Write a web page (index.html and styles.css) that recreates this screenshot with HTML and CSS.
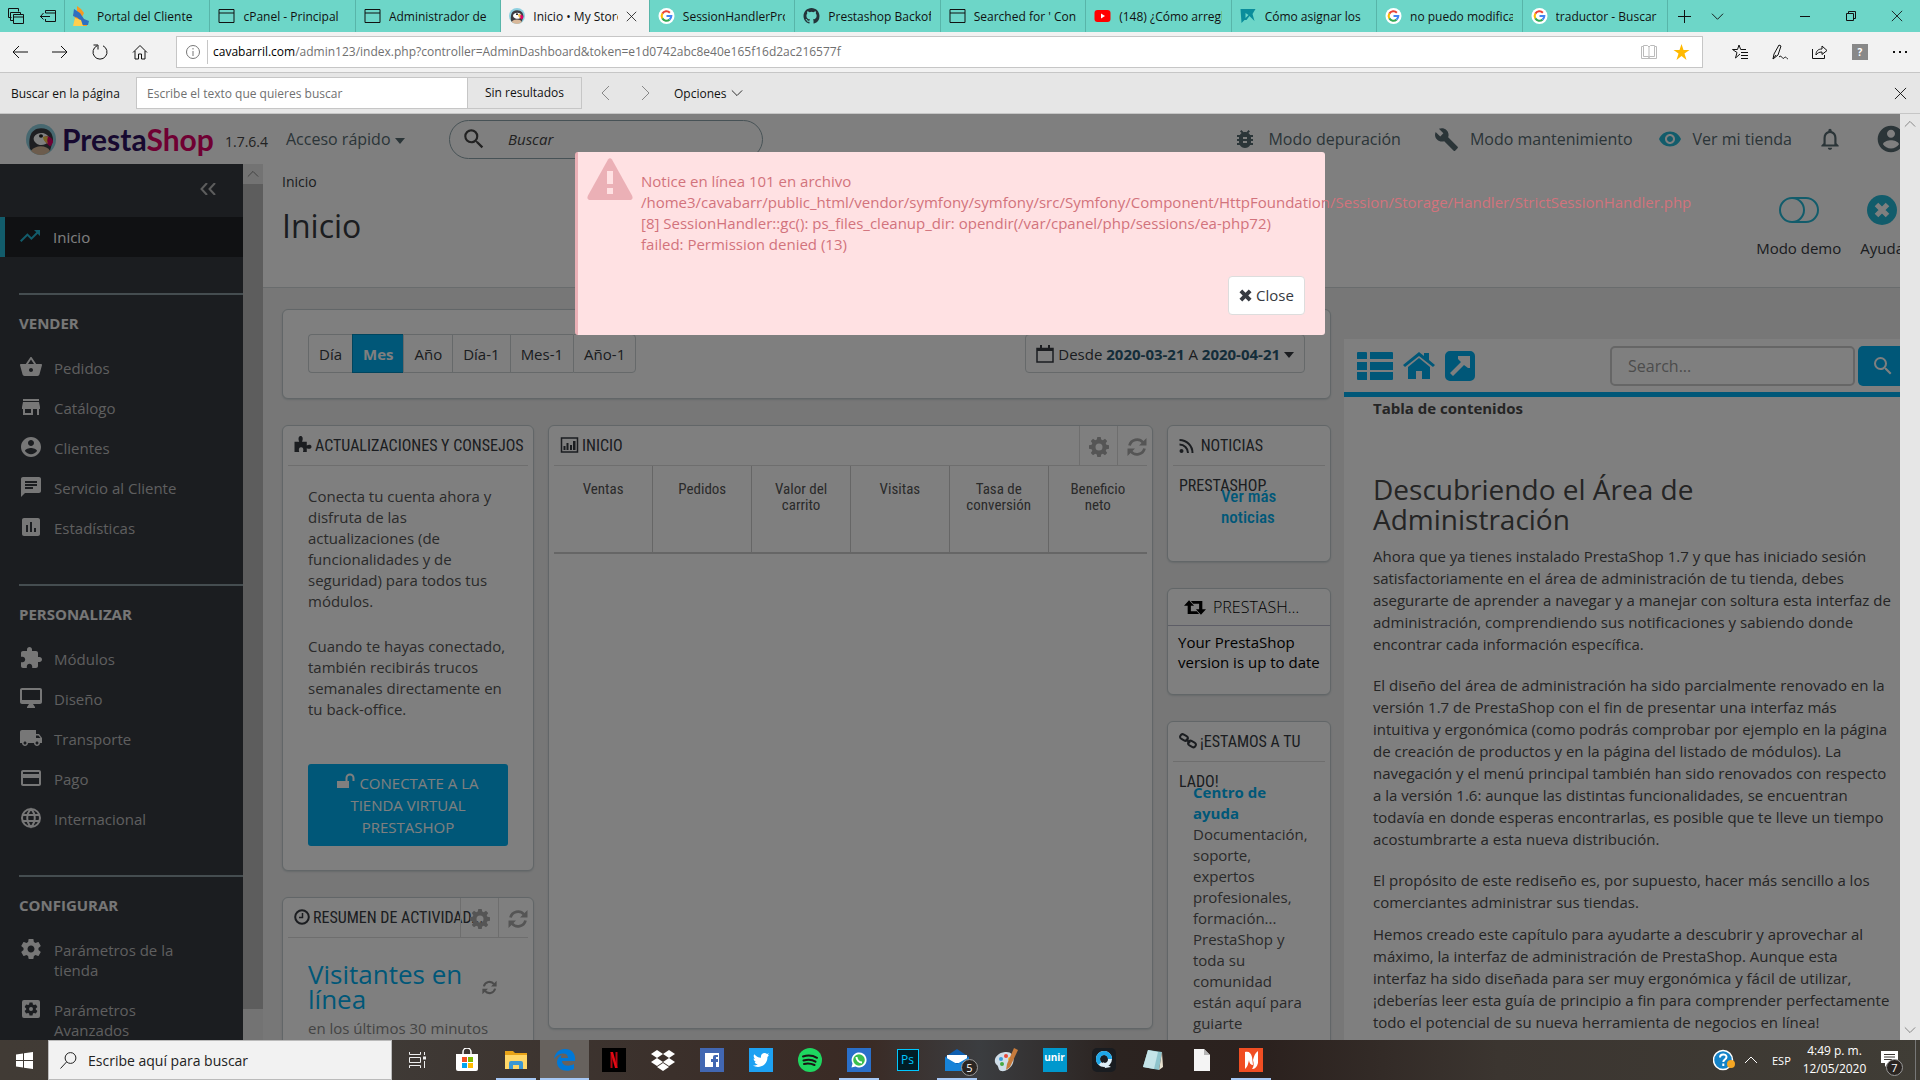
FILE: index.html
```html
<!DOCTYPE html>
<html lang="es">

<head>
  <meta charset="utf-8">
  <title>Inicio • My Store</title>
  <link rel="stylesheet" href="styles.css">
</head>

<body>
  <svg class="sprite" aria-hidden="true">
    <symbol id="i-window" viewBox="0 0 16 16"><path d="M.5 1.5h15v13H.5zM.5 5h15" fill="none" stroke="currentColor"/></symbol>
    <symbol id="i-google" viewBox="0 0 20 20"><circle cx="10" cy="10" r="10" fill="#fff"/><path d="M14.2 5.8A6 6 0 0 0 4.8 7" fill="none" stroke="#ea4335" stroke-width="2.6"/><path d="M4.8 7a6 6 0 0 0 0 6" fill="none" stroke="#fbbc05" stroke-width="2.6"/><path d="M4.8 13a6 6 0 0 0 9 1.5" fill="none" stroke="#34a853" stroke-width="2.6"/><path d="M13.8 14.5A6 6 0 0 0 16 10h-6" fill="none" stroke="#4285f4" stroke-width="2.6"/></symbol>
    <symbol id="i-x" viewBox="0 0 14 14"><path d="M1 1l12 12M13 1L1 13" fill="none" stroke="currentColor"/></symbol>
    <symbol id="i-down" viewBox="0 0 14 14"><path d="M1 4l6 6 6-6" fill="none" stroke="currentColor"/></symbol>
    <symbol id="i-up" viewBox="0 0 14 14"><path d="M1 10l6-6 6 6" fill="none" stroke="currentColor"/></symbol>
    <symbol id="i-puffin" viewBox="0 0 30 36" preserveAspectRatio="none"><ellipse cx="15" cy="18" rx="15" ry="18" fill="#8fd0e0"/><path d="M4 29C2 18 4 5 15 5c9 0 12 7 12 14l-3 12c-5 4-16 4-20-2z" fill="#3d3c42"/><path d="M8 15c2-4 8-6 12-3 3 2 4 5 3 8-3 5-10 6-13 2-2-2-3-4-2-7z" fill="#fff"/><path d="M5 31c4-7 16-7 19 0-2 3-5 5-9 5s-8-2-10-5z" fill="#d8b89a"/><path d="M18 15c5-2 8 1 9 5 0 2-1 4-3 6-3-3-6-6-6-11z" fill="#df0067"/><path d="M17 15c2-1 4-1 5 0-1 3-1 5 0 8-3-2-5-4-5-8z" fill="#f7c948"/><circle cx="15" cy="14" r="2" fill="#222"/></symbol>
    <symbol id="i-search" viewBox="0 0 24 24"><path d="M15.5 14h-.79l-.28-.27A6.471 6.471 0 0 0 16 9.5 6.5 6.5 0 1 0 9.5 16c1.61 0 3.09-.59 4.23-1.57l.27.28v.79l5 4.99L20.49 19l-4.99-5zm-6 0C7.01 14 5 11.99 5 9.5S7.01 5 9.5 5 14 7.01 14 9.5 11.99 14 9.5 14z"/></symbol>
    <symbol id="i-bug" viewBox="0 0 24 24"><path d="M20 8h-2.81c-.45-.78-1.07-1.45-1.82-1.96L17 4.41 15.59 3l-2.17 2.17C12.96 5.06 12.49 5 12 5s-.96.06-1.41.17L8.41 3 7 4.41l1.62 1.63C7.88 6.55 7.26 7.22 6.81 8H4v2h2.09c-.05.33-.09.66-.09 1v1H4v2h2v1c0 .34.04.67.09 1H4v2h2.81c1.04 1.79 2.97 3 5.19 3s4.15-1.21 5.19-3H20v-2h-2.09c.05-.33.09-.66.09-1v-1h2v-2h-2v-1c0-.34-.04-.67-.09-1H20V8zm-6 8h-4v-2h4v2zm0-4h-4v-2h4v2z"/></symbol>
    <symbol id="i-build" viewBox="0 0 24 24"><path d="M22.7 19l-9.1-9.1c.9-2.3.4-5-1.5-6.9-2-2-5-2.4-7.4-1.3L9 6 6 9 1.6 4.7C.4 7.1.9 10.1 2.9 12.1c1.9 1.9 4.6 2.4 6.9 1.5l9.1 9.1c.4.4 1 .4 1.4 0l2.3-2.3c.5-.4.5-1.1.1-1.4z"/></symbol>
    <symbol id="i-eye" viewBox="0 0 24 24"><path d="M12 4.5C7 4.5 2.73 7.61 1 12c1.73 4.39 6 7.5 11 7.5s9.27-3.11 11-7.5c-1.73-4.39-6-7.5-11-7.5zM12 17c-2.76 0-5-2.24-5-5s2.24-5 5-5 5 2.240 5 5-2.240 5-5 5zm0-8c-1.660 0-3 1.340-3 3s1.340 3 3 3 3-1.340 3-3-1.340-3-3-3z"/></symbol>
    <symbol id="i-bell" viewBox="0 0 24 24"><path d="M12 22c1.100 0 2-.9 2-2h-4c0 1.100.9 2 2 2zm6-6v-5c0-3.070-1.630-5.640-4.500-6.320V4c0-.83-.67-1.500-1.500-1.500s-1.500.67-1.500 1.500v.68C7.640 5.360 6 7.920 6 11v5l-2 2v1h16v-1l-2-2zm-2 1H8v-6c0-2.480 1.510-4.500 4-4.500s4 2.020 4 4.500v6z"/></symbol>
    <symbol id="i-user" viewBox="0 0 24 24"><path d="M12 2C6.480 2 2 6.480 2 12s4.480 10 10 10 10-4.480 10-10S17.520 2 12 2zm0 3c1.660 0 3 1.340 3 3s-1.340 3-3 3-3-1.340-3-3 1.340-3 3-3zm0 14.200c-2.500 0-4.710-1.280-6-3.220.03-1.990 4-3.080 6-3.080 1.990 0 5.970 1.090 6 3.080-1.290 1.940-3.500 3.220-6 3.220z"/></symbol>
    <symbol id="i-trend" viewBox="0 0 24 24"><path d="M16 6l2.290 2.290-4.880 4.880-4-4L2 16.590 3.410 18l6-6 4 4 6.300-6.290L22 12V6z"/></symbol>
    <symbol id="i-basket" viewBox="0 0 24 24"><path d="M17.210 9l-4.380-6.560c-.19-.28-.51-.42-.83-.42-.32 0-.64.14-.83.43L6.790 9H2c-.55 0-1 .45-1 1 0 .09.01.18.04.27l2.540 9.270c.23.84 1 1.460 1.920 1.460h13c.92 0 1.690-.62 1.930-1.460l2.540-9.270L23 10c0-.55-.45-1-1-1h-4.790zM9 9l3-4.400L15 9H9zm3 8c-1.100 0-2-.9-2-2s.9-2 2-2 2 .9 2 2-.9 2-2 2z"/></symbol>
    <symbol id="i-store" viewBox="0 0 24 24"><path d="M20 4H4v2h16V4zm1 10v-2l-1-5H4l-1 5v2h1v6h10v-6h4v6h2v-6h1zm-9 4H6v-4h6v4z"/></symbol>
    <symbol id="i-chat" viewBox="0 0 24 24"><path d="M20 2H4c-1.100 0-1.990.9-1.990 2L2 22l4-4h14c1.100 0 2-.9 2-2V4c0-1.100-.9-2-2-2zM6 9h12v2H6V9zm8 5H6v-2h8v2zm4-6H6V6h12v2z"/></symbol>
    <symbol id="i-stats" viewBox="0 0 24 24"><path d="M19 3H5c-1.100 0-2 .9-2 2v14c0 1.100.9 2 2 2h14c1.100 0 2-.9 2-2V5c0-1.100-.9-2-2-2zM9 17H7v-7h2v7zm4 0h-2V7h2v10zm4 0h-2v-4h2v4z"/></symbol>
    <symbol id="i-module" viewBox="0 0 24 24"><path d="M20.500 11H19V7c0-1.100-.9-2-2-2h-4V3.500C13 2.120 11.880 1 10.500 1S8 2.120 8 3.500V5H4c-1.100 0-1.990.9-1.990 2v3.800H3.500c1.490 0 2.700 1.210 2.700 2.700s-1.210 2.700-2.700 2.700H2V20c0 1.100.9 2 2 2h3.800v-1.500c0-1.490 1.210-2.700 2.700-2.700 1.490 0 2.700 1.210 2.700 2.700V22H17c1.100 0 2-.9 2-2v-4h1.500c1.380 0 2.500-1.120 2.500-2.500S21.880 11 20.500 11z"/></symbol>
    <symbol id="i-desktop" viewBox="0 0 24 24"><path d="M21 2H3c-1.100 0-2 .9-2 2v12c0 1.100.9 2 2 2h7l-2 3v1h8v-1l-2-3h7c1.100 0 2-.9 2-2V4c0-1.100-.9-2-2-2zm0 12H3V4h18v10z"/></symbol>
    <symbol id="i-truck" viewBox="0 0 24 24"><path d="M20 8h-3V4H3c-1.100 0-2 .9-2 2v11h2c0 1.660 1.340 3 3 3s3-1.340 3-3h6c0 1.660 1.340 3 3 3s3-1.340 3-3h2v-5l-3-4zM6 18.500c-.83 0-1.500-.67-1.500-1.500s.67-1.500 1.500-1.500 1.500.67 1.500 1.500-.67 1.500-1.500 1.500zm13.500-9l1.960 2.500H17V9.500h2.500zm-1.500 9c-.83 0-1.500-.67-1.500-1.500s.67-1.500 1.500-1.500 1.500.67 1.500 1.500-.67 1.500-1.500 1.500z"/></symbol>
    <symbol id="i-card" viewBox="0 0 24 24"><path d="M20 4H4c-1.110 0-1.990.89-1.990 2L2 18c0 1.110.89 2 2 2h16c1.110 0 2-.89 2-2V6c0-1.110-.89-2-2-2zm0 14H4v-6h16v6zm0-10H4V6h16v2z"/></symbol>
    <symbol id="i-globe" viewBox="0 0 24 24"><path d="M12 3a9 9 0 1 0 0 18 9 9 0 0 0 0-18zM12 3c-5 5-5 13 0 18 5-5 5-13 0-18zM4 9h16M4 15h16" fill="none" stroke="currentColor" stroke-width="2"/></symbol>
    <symbol id="i-gear" viewBox="0 0 24 24"><path d="M19.430 12.980c.04-.32.07-.64.07-.98s-.03-.66-.07-.98l2.110-1.650c.19-.15.24-.42.12-.64l-2-3.460c-.12-.22-.39-.3-.61-.22l-2.490 1c-.52-.4-1.080-.73-1.690-.98l-.38-2.650C14.460 2.180 14.250 2 14 2h-4c-.25 0-.46.18-.49.42l-.38 2.650c-.61.25-1.170.59-1.690.98l-2.490-1c-.23-.09-.49 0-.61.22l-2 3.460c-.13.22-.07.49.12.64l2.110 1.650c-.04.32-.07.65-.07.98s.03.66.07.98l-2.110 1.650c-.19.15-.24.42-.12.64l2 3.460c.12.22.39.3.61.22l2.490-1c.52.4 1.080.73 1.690.98l.38 2.650c.03.24.24.42.49.42h4c.25 0 .46-.18.49-.42l.38-2.650c.61-.25 1.170-.59 1.690-.98l2.490 1c.23.09.49 0 .61-.22l2-3.460c.12-.22.07-.49-.12-.64l-2.110-1.650zM12 15.500c-1.930 0-3.500-1.570-3.500-3.500s1.570-3.500 3.500-3.500 3.500 1.570 3.500 3.500-1.570 3.500-3.500 3.500z"/></symbol>
    <symbol id="i-cog" viewBox="0 0 20 20"><path fill-rule="evenodd" d="M8.300 0h3.400l.5 2.600 1.600.7L16 1.800 18.200 4l-1.500 2.200.7 1.600 2.600.5v3.400l-2.600.5-.7 1.600 1.500 2.200-2.200 2.200-2.200-1.500-1.600.7-.5 2.600H8.300l-.5-2.600-1.600-.7L4 18.200 1.800 16l1.500-2.200-.7-1.600-2.600-.5V8.300l2.600-.5.7-1.600L1.800 4 4 1.800l2.200 1.500 1.600-.7zM10 6.500a3.500 3.500 0 1 0 0 7 3.500 3.500 0 0 0 0-7z"/></symbol>
    <symbol id="i-advanced" viewBox="0 0 24 24"><path fill-rule="evenodd" d="M5 3h14a2 2 0 0 1 2 2v14a2 2 0 0 1-2 2H5a2 2 0 0 1-2-2V5a2 2 0 0 1 2-2zm5.500 2.500l-.4 2-1 .6-2-.7-1.500 2.600 1.600 1.400v1.200l-1.600 1.400 1.500 2.600 2-.7 1 .6.4 2h3l.4-2 1-.6 2 .7 1.500-2.600-1.600-1.400v-1.200l1.600-1.400-1.500-2.600-2 .7-1-.6-.4-2zM12 10a2 2 0 1 1 0 4 2 2 0 0 1 0-4z"/></symbol>
    <symbol id="i-refresh" viewBox="0 0 20 20"><path d="M2.500 8.500A7.700 7.700 0 0 1 16 5.500M17.500 11.500A7.700 7.700 0 0 1 4 14.500" fill="none" stroke="currentColor" stroke-width="2.800"/><path d="M19.500 1v7.500H12zM.5 19v-7.500H8z"/></symbol>
    <symbol id="i-puzzle" viewBox="0 0 18 18"><path d="M0 6h5C3.500 2.500 4.500 0 6.500 0S9.500 2.500 8 6h5v4c2-1 5-1 5 1.500S15 14 13 13v4H9c1-3 0-5-2-5s-3 2-2 5H0z"/></symbol>
    <symbol id="i-chart" viewBox="0 0 18 16"><path d="M1 1h16v14H1z" fill="none" stroke="currentColor" stroke-width="1.500"/><path d="M3 9h2v4H3zM6 6h2v7H6zM9.500 8h2v5h-2zM12.500 4h2.500v9h-2.500z"/></symbol>
    <symbol id="i-rss" viewBox="0 0 14 14"><circle cx="2" cy="12" r="2"/><path d="M0 5.500A8.500 8.500 0 0 1 8.500 14M0 1a13 13 0 0 1 13 13" fill="none" stroke="currentColor" stroke-width="2"/></symbol>
    <symbol id="i-retweet" viewBox="0 0 24 16"><path d="M5.500 0L11 6H7.500v6H14l2.500 3H4V6H0zM18.500 16L13 10h3.500V4H10L7.500 1H20v9h4z"/></symbol>
    <symbol id="i-link" viewBox="0 0 18 16"><rect x="1" y="2" width="8" height="5" rx="2.500" transform="rotate(30 5 4.500)" fill="none" stroke="currentColor" stroke-width="2"/><rect x="9" y="8.500" width="8" height="5" rx="2.500" transform="rotate(30 13 11)" fill="none" stroke="currentColor" stroke-width="2"/><path d="M7 6l4 4" stroke="currentColor" stroke-width="2"/></symbol>
    <symbol id="i-clock" viewBox="0 0 16 16"><circle cx="8" cy="8" r="6.800" fill="none" stroke="currentColor" stroke-width="2"/><path d="M8.500 4v4.500H5" fill="none" stroke="currentColor" stroke-width="1.500"/></symbol>
    <symbol id="i-unlock" viewBox="0 0 18 16"><path d="M0 8h12v7H0z"/><path d="M9.500 8V5a3.500 3.500 0 0 1 7 0v3" fill="none" stroke="currentColor" stroke-width="2"/></symbol>
    <symbol id="i-calendar" viewBox="0 0 18 18"><path d="M1 3.500h16V17H1z" fill="none" stroke="currentColor" stroke-width="1.500"/><path d="M1 3h16v3H1zM4 0h2v4H4zM12 0h2v4h-2z"/></symbol>
    <symbol id="i-times" viewBox="0 0 14 14"><path d="M3.500.5L7 4 10.500.5l3 3L10 7l3.500 3.500-3 3L7 10l-3.500 3.500-3-3L4 7 .5 3.500z"/></symbol>
  </svg>

  <div class="tabbar">
    <div class="tab-tools">
      <svg width="16" height="16" viewBox="0 0 16 16" fill="none" stroke="#111"><path d="M3.500 9.500h-3v-9h10v3M5.500 12.500h-3v-8h10v2M5.500 6.500h10v9h-10zM5.500 9h10"/></svg>
      <svg width="16" height="16" viewBox="0 0 16 16" fill="none" stroke="#111"><path d="M5.500 5V2.500h10v11h-10V11M5.500 5h10M0 8.500h10M3.500 5L.5 8.500l3 3"/></svg>
    </div>
    <div class="tabs">
      <div class="tab"><svg width="16" height="20" viewBox="0 0 16 20"><path d="M4 0l4 3 3 4-2 4 5 5v4H1l1-8-2-4 4-1z" fill="#f59a23"/><path d="M1 3l6 4 4 6 5 2-1 4H9L5 12 0 10z" fill="#2f6fc0"/><path d="M2 12l6 2 2 6H0z" fill="#ffcf4d"/></svg><span>Portal del Cliente</span></div>
      <div class="tab"><svg class="ic16"><use href="#i-window"/></svg><span>cPanel - Principal</span></div>
      <div class="tab"><svg class="ic16"><use href="#i-window"/></svg><span>Administrador de</span></div>
      <div class="tab active"><svg width="16" height="16"><use href="#i-puffin"/></svg><span>Inicio • My Store</span><button class="icon-btn" aria-label="Cerrar pestaña"><svg width="11" height="11"><use href="#i-x"/></svg></button></div>
      <div class="tab"><svg class="ic16"><use href="#i-google"/></svg><span>SessionHandlerProxy</span></div>
      <div class="tab"><svg class="ic16" viewBox="0 0 16 16"><path fill="#24343a" d="M8 0C3.580 0 0 3.580 0 8c0 3.540 2.290 6.530 5.470 7.590.4.070.55-.17.55-.38v-1.490c-2.010.37-2.530-.49-2.690-.94-.09-.23-.48-.94-.82-1.130-.28-.15-.68-.52-.01-.53.63-.01 1.080.58 1.230.82.72 1.210 1.870.87 2.330.66.07-.52.28-.87.51-1.070-1.780-.2-3.640-.89-3.640-3.950 0-.87.31-1.590.82-2.150-.08-.2-.36-1.020.08-2.120 0 0 .67-.21 2.200.82a7.600 7.600 0 0 1 4 0c1.530-1.040 2.200-.82 2.200-.82.44 1.100.16 1.920.08 2.120.51.56.82 1.270.82 2.150 0 3.070-1.870 3.750-3.650 3.950.29.25.54.73.54 1.480v2.200c0 .21.15.46.55.38A8 8 0 0 0 16 8c0-4.420-3.580-8-8-8z"/></svg><span>Prestashop Backoffice</span></div>
      <div class="tab"><svg class="ic16"><use href="#i-window"/></svg><span>Searched for ' Controller</span></div>
      <div class="tab"><svg class="ic16" viewBox="0 0 16 16"><rect y="2" width="16" height="12" rx="3" fill="#f00"/><path d="M6.500 5.500v5l4-2.500z" fill="#fff"/></svg><span>(148) ¿Cómo arreglar</span></div>
      <div class="tab"><svg class="ic16" viewBox="0 0 16 16"><path d="M0 1h15l-3 5 2 7-5-5-3 4H4l-3 3z" fill="#0a8d9b"/><path d="M5 5l3 2-3 3z" fill="#6dd6c8"/></svg><span>Cómo asignar los</span></div>
      <div class="tab"><svg class="ic16"><use href="#i-google"/></svg><span>no puedo modificar</span></div>
      <div class="tab"><svg class="ic16"><use href="#i-google"/></svg><span>traductor - Buscar</span></div>
    </div>
    <div class="window-tools">
      <button class="icon-btn w34" aria-label="Nueva pestaña"><svg width="13" height="13" viewBox="0 0 13 13"><path d="M6.500 0v13M0 6.500h13" stroke="#111"/></svg></button>
      <button class="icon-btn w34" aria-label="Vistas previas"><svg width="13" height="13"><use href="#i-down"/></svg></button>
      <span class="spacer"></span>
      <button class="icon-btn w46" aria-label="Minimizar"><svg width="10" height="10" viewBox="0 0 10 10"><path d="M0 5.500h10" stroke="#111"/></svg></button>
      <button class="icon-btn w46" aria-label="Restaurar"><svg width="10" height="10" viewBox="0 0 10 10" fill="none" stroke="#111"><path d="M.5 2.500h7v7h-7zM2.500 2.500v-2h7v7h-2"/></svg></button>
      <button class="icon-btn w46" aria-label="Cerrar"><svg width="12" height="12"><use href="#i-x"/></svg></button>
    </div>
  </div>

  <div class="navbar">
    <button class="icon-btn w40" aria-label="Atrás"><svg width="16" height="16" viewBox="0 0 16 16" fill="none" stroke="#111"><path d="M1 8h15M7 2L1 8l6 6"/></svg></button>
    <button class="icon-btn w40" aria-label="Adelante"><svg width="16" height="16" viewBox="0 0 16 16" fill="none" stroke="#111"><path d="M0 8h15M9 2l6 6-6 6"/></svg></button>
    <button class="icon-btn w40" aria-label="Actualizar"><svg width="16" height="16" viewBox="0 0 16 16" fill="none" stroke="#111"><path d="M11 1.800A7 7 0 1 1 5 1.800M1.500 1H6v4.500"/></svg></button>
    <button class="icon-btn w40" aria-label="Página principal"><svg width="16" height="16" viewBox="0 0 16 16" fill="none" stroke="#111"><path d="M1 8.500L8 1.500l7 7M3 7v8h3.500v-5h3v5H13V7"/></svg></button>
    <div class="address">
      <svg width="14" height="14" viewBox="0 0 14 14" fill="none" stroke="#777"><circle cx="7" cy="7" r="6.500"/><path d="M7 3v1.500M7 6v5"/></svg>
      <span class="address-text"><b>cavabarril.com</b>/admin123/index.php?controller=AdminDashboard&amp;token=e1d0742abc8e40e165f16d2ac216577f</span>
      <svg width="16" height="16" viewBox="0 0 16 16" fill="none" stroke="#bbb"><path d="M.5 2.500h2v-1h4L8 3l1.500-1.500h4v1h2v12H.5zM2.500 2.500v10h5L8 14l.5-1.500h5v-10M8 3v10"/></svg>
      <svg width="17" height="16" viewBox="0 0 16 16"><path fill="#ffb900" d="M8 0l2 6h6l-5 3.500 2 6.500-5-4-5 4 2-6.500L0 6h6z"/></svg>
    </div>
    <button class="icon-btn w40" aria-label="Centro"><svg width="16" height="16" viewBox="0 0 16 16" fill="none" stroke="#111"><path d="M8 10L3.500 14 5 8.500.5 5.500H5.500L7 1l1.700 4.500H14M9 8.500h7M9 11.500h7M9 14.500h7"/></svg></button>
    <button class="icon-btn w40" aria-label="Agregar notas"><svg width="16" height="16" viewBox="0 0 16 16" fill="none" stroke="#111"><path d="M1 15l1-5 5-9 2 1-3 9-5 4 3-4M7 13c3-3 3 3 5 1s2 0 4 1"/></svg></button>
    <button class="icon-btn w40" aria-label="Compartir"><svg width="16" height="16" viewBox="0 0 16 16" fill="none" stroke="#111"><path d="M.5 5v9.500h12V11M4 11c0-4 2-6 6-6V2l5 4.500-5 4V8C7 8 5.500 9 4 11z"/></svg></button>
    <button class="icon-btn w40" aria-label="Ayuda"><span class="q-badge">?</span></button>
    <button class="icon-btn w40" aria-label="Más"><svg width="14" height="4" viewBox="0 0 14 4"><path d="M0 1h2v2H0zM6 1h2v2H6zM12 1h2v2h-2z" fill="#111"/></svg></button>
  </div>

  <div class="findbar">
    <label for="find">Buscar en la página</label>
    <input id="find" type="text" placeholder="Escribe el texto que quieres buscar">
    <span class="find-result">Sin resultados</span>
    <button class="icon-btn w40 gray" aria-label="Anterior"><svg width="9" height="16" viewBox="0 0 9 16" fill="none" stroke="currentColor"><path d="M8 1L1 8l7 7"/></svg></button>
    <button class="icon-btn w40 gray" aria-label="Siguiente"><svg width="9" height="16" viewBox="0 0 9 16" fill="none" stroke="currentColor"><path d="M1 1l7 7-7 7"/></svg></button>
    <button class="find-options">Opciones <svg width="12" height="12"><use href="#i-down"/></svg></button>
    <span class="spacer"></span>
    <button class="icon-btn w40" aria-label="Cerrar búsqueda"><svg width="13" height="13"><use href="#i-x"/></svg></button>
  </div>

  <div class="viewport">
    <div class="page">
      <header class="header">
        <svg class="brand-bird"><use href="#i-puffin"/></svg>
        <span class="brand">Presta<em>Shop</em></span>
        <span class="version">1.7.6.4</span>
        <button class="quick">Acceso rápido <i class="caret"></i></button>
        <div class="header-search"><svg width="26" height="26"><use href="#i-search"/></svg><input type="text" placeholder="Buscar" aria-label="Buscar"></div>
        <span class="spacer"></span>
        <a class="header-link debug" href="#"><svg width="24" height="24"><use href="#i-bug"/></svg>Modo depuración</a>
        <a class="header-link" href="#"><svg width="25" height="25"><use href="#i-build"/></svg>Modo mantenimiento</a>
        <a class="header-link shop" href="#"><svg width="24" height="24"><use href="#i-eye"/></svg>Ver mi tienda</a>
        <button class="icon-btn bell" aria-label="Notificaciones"><svg width="26" height="26"><use href="#i-bell"/></svg></button>
        <button class="icon-btn avatar" aria-label="Cuenta"><svg width="32" height="32"><use href="#i-user"/></svg></button>
      </header>

      <div class="body">
        <nav class="sidebar">
          <button class="icon-btn collapse" aria-label="Contraer menú"><svg width="16" height="12" viewBox="0 0 16 12" fill="none" stroke="#bbb" stroke-width="2"><path d="M7 0L1.500 6 7 12M15 0L9.500 6l5.500 6"/></svg></button>
          <a class="item current" href="#"><svg class="ic"><use href="#i-trend"/></svg>Inicio</a>
          <h2>VENDER</h2>
          <a class="item" href="#"><svg class="ic"><use href="#i-basket"/></svg>Pedidos</a>
          <a class="item" href="#"><svg class="ic"><use href="#i-store"/></svg>Catálogo</a>
          <a class="item" href="#"><svg class="ic"><use href="#i-user"/></svg>Clientes</a>
          <a class="item" href="#"><svg class="ic"><use href="#i-chat"/></svg>Servicio al Cliente</a>
          <a class="item" href="#"><svg class="ic"><use href="#i-stats"/></svg>Estadísticas</a>
          <h2>PERSONALIZAR</h2>
          <a class="item" href="#"><svg class="ic"><use href="#i-module"/></svg>Módulos</a>
          <a class="item" href="#"><svg class="ic"><use href="#i-desktop"/></svg>Diseño</a>
          <a class="item" href="#"><svg class="ic"><use href="#i-truck"/></svg>Transporte</a>
          <a class="item" href="#"><svg class="ic"><use href="#i-card"/></svg>Pago</a>
          <a class="item" href="#"><svg class="ic"><use href="#i-globe"/></svg>Internacional</a>
          <h2>CONFIGURAR</h2>
          <a class="item" href="#"><svg class="ic"><use href="#i-gear"/></svg>Parámetros de la<br>tienda</a>
          <a class="item" href="#"><svg class="ic"><use href="#i-advanced"/></svg>Parámetros<br>Avanzados</a>
        </nav>
        <div class="scroll inner"><svg width="12" height="12"><use href="#i-up"/></svg><span class="thumb"></span></div>

        <main class="main">
          <div class="page-head">
            <div>
              <a class="crumb" href="#">Inicio</a>
              <h1>Inicio</h1>
            </div>
            <span class="spacer"></span>
            <a class="tool" href="#"><svg width="40" height="30" viewBox="0 0 40 30" fill="none" stroke="currentColor" stroke-width="2"><rect x="1" y="3" width="38" height="24" rx="12"/><path d="M13 3a12 12 0 0 1 0 24"/></svg>Modo demo</a>
            <a class="tool help-tool" href="#"><svg width="30" height="30" viewBox="0 0 30 30"><circle cx="15" cy="15" r="15" fill="currentColor"/><path d="M9.500 9.500l11 11M20.500 9.500l-11 11" stroke="#fff" stroke-width="5"/></svg>Ayuda</a>
          </div>

          <div class="content">
            <div class="dashboard">
              <section class="panel calendar">
                <div class="btn-group">
                  <button>Día</button><button class="on">Mes</button><button>Año</button><button>Día-1</button><button>Mes-1</button><button>Año-1</button>
                </div>
                <button class="datepicker"><svg width="18" height="18"><use href="#i-calendar"/></svg> Desde <b>2020-03-21</b> A <b>2020-04-21</b> <i class="caret"></i></button>
              </section>

              <div class="columns">
                <div class="col">
                  <section class="panel tips">
                    <h3><svg width="18" height="17"><use href="#i-puzzle"/></svg>ACTUALIZACIONES Y CONSEJOS</h3>
                    <div class="panel-text">
                      <p>Conecta tu cuenta ahora y disfruta de las actualizaciones (de funcionalidades y de seguridad) para todos tus módulos.</p>
                      <p>Cuando te hayas conectado, también recibirás trucos semanales directamente en tu back-office.</p>
                      <button class="connect"><svg width="18" height="16"><use href="#i-unlock"/></svg> CONECTATE A LA TIENDA VIRTUAL PRESTASHOP</button>
                    </div>
                  </section>
                  <section class="panel activity">
                    <h3><svg width="16" height="16"><use href="#i-clock"/></svg>RESUMEN DE ACTIVIDAD...
                      <span class="head-tools"><button aria-label="Configurar"><svg width="20" height="20"><use href="#i-cog"/></svg></button><button aria-label="Recargar"><svg width="20" height="20"><use href="#i-refresh"/></svg></button></span></h3>
                    <div class="panel-text visitors">
                      <a href="#">Visitantes en línea</a>
                      <svg width="15" height="17"><use href="#i-refresh"/></svg>
                      <small>en los últimos 30 minutos</small>
                    </div>
                  </section>
                </div>

                <section class="panel sales">
                  <h3><svg width="19" height="16"><use href="#i-chart"/></svg>INICIO
                    <span class="head-tools"><button aria-label="Configurar"><svg width="20" height="20"><use href="#i-cog"/></svg></button><button aria-label="Recargar"><svg width="20" height="20"><use href="#i-refresh"/></svg></button></span></h3>
                  <table>
                    <tr><th>Ventas</th><th>Pedidos</th><th>Valor del carrito</th><th>Visitas</th><th>Tasa de conversión</th><th>Beneficio neto</th></tr>
                  </table>
                </section>

                <div class="col">
                  <section class="panel news">
                    <h3><svg width="15" height="14"><use href="#i-rss"/></svg> NOTICIAS PRESTASHOP</h3>
                    <a href="#">Ver más<br>noticias</a>
                  </section>
                  <section class="panel update">
                    <h3><svg width="22" height="15"><use href="#i-retweet"/></svg><span>PRESTASHOP UPDATE</span></h3>
                    <p>Your PrestaShop<br>version is up to date</p>
                  </section>
                  <section class="panel support">
                    <h3><svg width="18" height="16"><use href="#i-link"/></svg>¡ESTAMOS A TU LADO!</h3>
                    <div class="support-text"><a href="#">Centro de ayuda</a><br>Documentación, soporte, expertos profesionales, formación... PrestaShop y toda su comunidad están aquí para guiarte</div>
                  </section>
                </div>
              </div>
            </div>

            <aside class="help">
              <div class="help-bar">
                <a href="#" aria-label="Índice"><svg width="36" height="30" viewBox="0 0 36 30"><path d="M1 1h8a1 1 0 0 1 1 1v6H0V2a1 1 0 0 1 1-1zM13 1h22a1 1 0 0 1 1 1v6H13zM0 11h10v8H0zM13 11h23v8H13zM0 21h10v8H1a1 1 0 0 1-1-1zM13 21h23v7a1 1 0 0 1-1 1H13z"/></svg></a>
                <a href="#" aria-label="Portada"><svg width="32" height="28" viewBox="0 0 32 28"><path d="M0 13L16 0l5 4V1h5v7l6 5-2 2L16 4 2 15zM16 6l11 9v12h-8v-8h-6v8H5V15z"/></svg></a>
                <a href="#" aria-label="Abrir aparte"><svg width="30" height="30" viewBox="0 0 30 30"><path fill-rule="evenodd" d="M5 0h20a5 5 0 0 1 5 5v20a5 5 0 0 1-5 5H5a5 5 0 0 1-5-5V5a5 5 0 0 1 5-5zm8 5v3l3 3L5 22l3 3 11-11 4 3h2V5z"/></svg></a>
                <span class="spacer"></span>
                <input type="text" placeholder="Search..." aria-label="Buscar en la ayuda">
                <button aria-label="Buscar"><svg width="24" height="24"><use href="#i-search"/></svg></button>
              </div>
              <div class="help-text">
                <strong>Tabla de contenidos</strong>
                <h2>Descubriendo el Área de<br>Administración</h2>
                <p>Ahora que ya tienes instalado PrestaShop 1.7 y que has iniciado sesión satisfactoriamente en el área de administración de tu tienda, debes asegurarte de aprender a navegar y a manejar con soltura esta interfaz de administración, comprendiendo sus notificaciones y sabiendo donde encontrar cada información específica.</p>
                <p>El diseño del área de administración ha sido parcialmente renovado en la versión 1.7 de PrestaShop con el fin de presentar una interfaz más intuitiva y ergonómica (como podrás comprobar por ejemplo en la página de creación de productos y en la página del listado de módulos). La navegación y el menú principal también han sido renovados con respecto a la versión 1.6: aunque las distintas funcionalidades, se encuentran todavía en donde esperas encontrarlas, es posible que te lleve un tiempo acostumbrarte a esta nueva distribución.</p>
                <p class="tight">El propósito de este rediseño es, por supuesto, hacer más sencillo a los comerciantes administrar sus tiendas.</p>
                <p>Hemos creado este capítulo para ayudarte a descubrir y aprovechar al máximo, la interfaz de administración de PrestaShop. Aunque esta interfaz ha sido diseñada para ser muy ergonómica y fácil de utilizar, ¡deberías leer esta guía de principio a fin para comprender perfectamente todo el potencial de su nueva herramienta de negocios en línea!</p>
              </div>
            </aside>
          </div>
        </main>
      </div>

      <div class="backdrop">
        <div class="modal" role="alertdialog" aria-label="Notice">
          <svg class="warn" viewBox="0 0 46 42"><path d="M21 1.500q2-2.500 4 0l20 36q2 4.500-3 4.500H4q-5 0-3-4.500z" fill="#ebb0b6"/><path d="M20 13h6v13h-6zM20 30h6v6h-6z" fill="#ffe1e3"/></svg>
          <p>Notice en línea 101 en archivo<br>/home3/cavabarr/public_html/vendor/symfony/symfony/src/Symfony/Component/HttpFoundation/Session/Storage/Handler/StrictSessionHandler.php<br>[8] SessionHandler::gc(): ps_files_cleanup_dir: opendir(/var/cpanel/php/sessions/ea-php72)<br>failed: Permission denied (13)</p>
          <button><svg width="13" height="13"><use href="#i-times"/></svg> Close</button>
        </div>
      </div>
    </div>
    <div class="scroll outer"><svg width="12" height="12"><use href="#i-up"/></svg><svg width="12" height="12"><use href="#i-down"/></svg></div>
  </div>

  <div class="taskbar">
    <button class="start" aria-label="Inicio"><svg width="17" height="17" viewBox="0 0 17 17" fill="#fff"><path d="M0 2.500L7 1.500V8H0zM8 1.300L17 0v8H8zM0 9h7v6.500l-7-1zM8 9h9v8l-9-1.300z"/></svg></button>
    <div class="task-search"><svg width="17" height="17" viewBox="0 0 17 17" fill="none" stroke="#222"><circle cx="10.500" cy="6" r="5.400"/><path d="M6.500 10L.5 16.500"/></svg><input type="text" placeholder="Escribe aquí para buscar" aria-label="Buscar en Windows"></div>
    <div class="tasks">
      <button class="task" aria-label="Vista de tareas"><svg width="17" height="16" viewBox="0 0 17 16" fill="none" stroke="#eee"><path d="M.5 0v2.500h11V0M.5 5.500h11v5H.5zM.5 16v-2.500h11V16M15.500 0v3M15.500 9v7"/><path d="M14 4.500h3v3h-3z" fill="#eee" stroke="none"/></svg></button>
      <button class="task" aria-label="Tienda"><svg width="24" height="24" viewBox="0 0 24 24"><path d="M8 7V4a4 4 0 0 1 8 0v3" fill="none" stroke="#fff" stroke-width="1.500"/><path d="M1 6h22v15a2 2 0 0 1-2 2H3a2 2 0 0 1-2-2z" fill="#fff"/><path d="M7 9h5v5H7z" fill="#f25022"/><path d="M13 9h5v5h-5z" fill="#7fba00"/><path d="M7 15h5v5H7z" fill="#00a4ef"/><path d="M13 15h5v5h-5z" fill="#ffb900"/></svg></button>
      <button class="task running" aria-label="Explorador"><svg width="24" height="24" viewBox="0 0 24 24"><path d="M1 3h8l2 2h12v16H1z" fill="#e8a317"/><path d="M1 7h22v14H1z" fill="#ffd768"/><path d="M5 21v-6q0-2 2-2h10q2 0 2 2v6h-4v-4H9v4z" fill="#3b97d3"/></svg></button>
      <button class="task running current-app" aria-label="Edge"><svg width="22" height="22" viewBox="0 0 22 22"><path fill="#0078d7" d="M0 10C1 4 5 0 11 0c7 0 11 5 10 12H8c0 5 7 6 12 3v5C12 24 3 21 3 13c0-3 2-6 5-7-1 1-1 2-1 3h7c0-6-9-6-14 1z"/></svg></button>
      <button class="task" aria-label="Netflix"><svg width="24" height="24" viewBox="0 0 24 24"><path d="M0 0h24v24H0z" fill="#000"/><path d="M9.500 4v16M14.500 4v16" stroke="#b20710" stroke-width="2"/><path d="M8.500 4H11l4.500 16H13z" fill="#e50914"/></svg></button>
      <button class="task" aria-label="Dropbox"><svg width="24" height="22" viewBox="0 0 24 22" fill="#fff"><path d="M6 1l6 4-6 4-6-4zM18 1l6 4-6 4-6-4zM6 9l6 4-6 4-6-4zM18 9l6 4-6 4-6-4zM12 14l6 4-6 4-6-4z"/></svg></button>
      <button class="task" aria-label="Facebook"><svg width="24" height="24" viewBox="0 0 24 24"><path d="M0 0h24v24H0z" fill="#4267b2"/><path d="M5 5h14v14h-3v-5h2v-3h-2V9h2V7h-3q-2 0-2 2v2h-2v3h2v5H5z" fill="#fff"/></svg></button>
      <button class="task" aria-label="Twitter"><svg width="24" height="24" viewBox="0 0 24 24"><path d="M0 0h24v24H0z" fill="#1da1f2"/><path d="M20 7.500l-1.600 1.500c.3 6-4.400 10-9.400 10-2 0-3.700-.5-5-1.400 2 .1 3.500-.4 4.800-1.400-1.500 0-2.700-1-3.100-2.300h1.500C5.500 13.500 4.600 12 4.600 10.500l1.500.4C4.600 9.700 4.300 7.800 5.200 6.300c1.700 2 4 3.300 6.800 3.500C11.500 7.300 13 5 15.500 5c1 0 1.900.4 2.500 1l2-.8-1.200 1.800z" fill="#fff"/></svg></button>
      <button class="task" aria-label="Spotify"><svg width="24" height="24" viewBox="0 0 24 24"><circle cx="12" cy="12" r="12" fill="#1ed760"/><path d="M5 8.500c5-1.500 10-1 14 1.300M5.500 12.500c4-1.200 9-.8 12 1.200M6 16c4-1 7-.6 10.500 1" fill="none" stroke="#191414" stroke-width="2" stroke-linecap="round"/></svg></button>
      <button class="task running" aria-label="WhatsApp"><svg width="24" height="24" viewBox="0 0 24 24"><path d="M0 0h24v24H0z" fill="#2a6fc9"/><path d="M4.500 19.500l1-4a7.500 7.500 0 1 1 3 3z" fill="#fff"/><circle cx="12" cy="12" r="5.800" fill="#3bbf4e"/><path d="M9.500 9c0 3 2.500 5.500 5.500 5.500" fill="none" stroke="#fff" stroke-width="2"/></svg></button>
      <button class="task" aria-label="Photoshop"><span class="ps">Ps</span></button>
      <button class="task running" aria-label="Correo"><svg width="24" height="22" viewBox="0 0 24 22"><path d="M0 8L12 0l12 8v14H0z" fill="#0f5fb0"/><path d="M2 6h20v8H2z" fill="#fff"/><path d="M0 8l12 7 12-7v14H0z" fill="#1683d8"/></svg><span class="count">5</span></button>
      <button class="task" aria-label="Paint"><svg width="24" height="24" viewBox="0 0 24 24"><path d="M11 4c7-1 10 5 8 11-2 5-7 9-12 8-3-1-2-4-4-6-5-4-1-12 8-13z" fill="#cfdde8"/><circle cx="7" cy="11" r="2" fill="#3a9ad9"/><circle cx="12" cy="8" r="2" fill="#e8483a"/><circle cx="16" cy="11" r="2" fill="#f4b827"/><circle cx="8" cy="16" r="2" fill="#49a942"/><path d="M20 0l4 2-8 17-4 3 1-6z" fill="#c77b3c"/></svg></button>
      <button class="task" aria-label="Unir"><span class="unir">unir</span></button>
      <button class="task" aria-label="QuickTime"><svg width="24" height="24" viewBox="0 0 24 24"><rect width="24" height="24" rx="5" fill="#191c20"/><circle cx="12" cy="11" r="6" fill="none" stroke="#dfeef7" stroke-width="4"/><path d="M8 15.500A6 6 0 1 1 18 11" fill="none" stroke="#1ea7e8" stroke-width="4"/><path d="M11 14l8 5-6 1z" fill="#dfeef7"/></svg></button>
      <button class="task" aria-label="Bloc de notas"><svg width="24" height="24" viewBox="0 0 24 24"><path d="M7 2l14 2-3 18-16-3z" fill="#8fc4cc"/><path d="M7 2l10 2-4 17-11-2z" fill="#c5e4e8"/><path d="M21 4l1 15-4 3z" fill="#e8e2d0"/></svg></button>
      <button class="task" aria-label="Documento"><svg width="18" height="22" viewBox="0 0 18 22"><path d="M1 0h10l6 6v16H1z" fill="#f4f4f4"/><path d="M11 0v6h6z" fill="#b5b5b5"/></svg></button>
      <button class="task running" aria-label="Nitro"><svg width="24" height="24" viewBox="0 0 24 24"><path d="M0 0h24v24H0z" fill="#f04e23"/><path d="M6 4c4-1 6 1 7 5l1 8c-2 0-4-2-4-5-1 4-1 6-4 9zM19 3v12c-1 4-3 6-6 6 2-3 2-5 1-9 1-4 2-7 5-9z" fill="#fff"/></svg></button>
    </div>
    <span class="spacer"></span>
    <div class="tray">
      <svg width="22" height="22" viewBox="0 0 22 22"><circle cx="10" cy="11" r="9.500" fill="#1583c8" stroke="#fff" stroke-width="1.500"/><path d="M7 8.500c0-4 6.500-4 6.500-.5 0 2.500-3.200 2.500-3.200 5M10.300 14.500V17" fill="none" stroke="#fff" stroke-width="2"/><circle cx="18" cy="15" r="4" fill="#f5a623"/></svg>
      <svg class="tray-up" width="14" height="14"><use href="#i-up"/></svg>
      <span class="lang">ESP</span>
      <span class="clock">4:49 p. m.<br>12/05/2020</span>
      <span class="notif"><svg width="17" height="16" viewBox="0 0 17 16"><path d="M0 0h17v12H7l-3 4v-4H0z" fill="#fff"/><path d="M3 3.500h11M3 6h11M3 8.500h8" stroke="#3b3632"/></svg><span class="count">7</span></span>
    </div>
  </div>
</body>

</html>
```
FILE: styles.css
```css
* {
  box-sizing: border-box;
}

body {
  margin: 0;
  height: 100vh;
  display: flex;
  flex-direction: column;
  overflow: hidden;
  font-family: "Open Sans", "Noto Sans", sans-serif;
  font-size: 14px;
  color: #111;
}

button,
input {
  font: inherit;
  color: inherit;
  margin: 0;
}

input::placeholder {
  color: inherit;
  opacity: 1;
}

a {
  color: inherit;
  text-decoration: none;
}

h1, h2, h3, p {
  margin: 0;
  font-weight: normal;
}

svg {
  fill: currentColor;
  flex: none;
}

svg[fill="none"] {
  fill: none;
}

.sprite {
  display: none;
}

.spacer {
  flex: 1;
}

.icon-btn {
  border: 0;
  padding: 0;
  background: none;
  display: flex;
  align-items: center;
  justify-content: center;
  flex: none;
}

.w34 { width: 33px; }
.w40 { width: 40px; }
.w46 { width: 46px; }
.gray { color: #888; }

.caret {
  display: inline-block;
  border: 5px solid transparent;
  border-top: 6px solid currentColor;
  border-bottom: 0;
  vertical-align: middle;
}

/* browser chrome */
.tabbar {
  display: flex;
  height: 32px;
  flex: none;
  background: #6dd6c8;
  font-size: 12px;
}

.tab-tools {
  width: 64px;
  display: flex;
  align-items: center;
  gap: 16px;
  padding-left: 8px;
}

.tabs {
  flex: 1;
  display: flex;
  min-width: 0;
}

.tab {
  flex: 1 1 0;
  min-width: 0;
  display: flex;
  align-items: center;
  gap: 8px;
  padding: 0 9px 0 8px;
  border-left: 1px solid #58b5a9;
  white-space: nowrap;
}

.tab span {
  flex: 1;
  overflow: hidden;
}

.tab.active {
  background: #f2f2f2;
  padding-right: 12px;
}

.ic16 {
  width: 17px;
  height: 16px;
}

.window-tools {
  width: 253px;
  display: flex;
  border-left: 1px solid #58b5a9;
}

.navbar {
  display: flex;
  height: 40px;
  flex: none;
  background: #f2f2f2;
  padding: 4px 0;
}

.address {
  flex: 1;
  display: flex;
  align-items: center;
  margin: 0 17px 0 16px;
  padding: 0 12px 0 9px;
  gap: 16px;
  border: 1px solid #c6c6c6;
  background: #fff;
  font-size: 12px;
}

.address-text {
  flex: 1;
  margin-left: -9px;
  padding-left: 5px;
  border-left: 1px solid #c6c6c6;
  line-height: 24px;
  color: #707070;
}

.address-text b {
  font-weight: normal;
  color: #000;
}

.q-badge {
  width: 16px;
  height: 16px;
  line-height: 16px;
  background: #888;
  color: #fff;
  font-size: 10px;
  font-weight: bold;
}

.findbar {
  display: flex;
  align-items: center;
  flex: none;
  height: 42px;
  padding-left: 11px;
  background: #e6e6e6;
  border-top: 1px solid #c6c6c6;
  border-bottom: 1px solid #c6c6c6;
  font-size: 12px;
}

.findbar label {
  width: 125px;
}

.findbar input {
  width: 332px;
  height: 32px;
  padding: 0 10px;
  border: 1px solid #c6c6c6;
}

.findbar input::placeholder {
  color: #707070;
}

.find-result {
  width: 114px;
  height: 32px;
  line-height: 30px;
  margin-right: 3px;
  text-align: center;
  border: 1px solid #c6c6c6;
  border-left: 0;
}

.find-options {
  display: flex;
  align-items: center;
  gap: 4px;
  margin-left: 9px;
  padding: 0;
  border: 0;
  background: none;
}

/* web page */
.viewport {
  flex: 1;
  min-height: 0;
  display: flex;
}

.page {
  flex: 1;
  min-width: 0;
  position: relative;
  display: flex;
  flex-direction: column;
  overflow: hidden;
}

.scroll {
  width: 20px;
  flex: none;
  display: flex;
  flex-direction: column;
  align-items: center;
  background: #e6e6e6;
  color: #777;
}

.scroll.outer {
  justify-content: space-between;
  padding: 4px 0;
}

.scroll.inner {
  padding: 4px 0 31px;
  gap: 4px;
}

.thumb {
  flex: 1;
  width: 20px;
  background: #bababa;
}

.header {
  display: flex;
  align-items: center;
  flex: none;
  height: 50px;
  padding-left: 26px;
  background: #fff;
  color: #566a71;
  font-size: 16px;
}

.brand-bird {
  width: 30px;
  height: 31px;
  margin-right: 6px;
}

.brand {
  width: 149px;
  font-family: Lato, sans-serif;
  font-weight: bold;
  font-size: 30px;
  line-height: 36px;
  color: #2e1260;
}

.brand em {
  font-style: normal;
  color: #df0067;
}

.version {
  width: 75px;
  padding: 4px 0 0 14px;
  font-size: 14px;
  color: #444;
}

.quick {
  width: 163px;
  padding: 0;
  border: 0;
  background: none;
  text-align: left;
  white-space: nowrap;
}

.header-search {
  display: flex;
  align-items: center;
  width: 314px;
  height: 39px;
  padding-left: 11px;
  border: 1px solid #8fa5ac;
  border-radius: 20px;
  color: #444;
}

.header-search input {
  width: 200px;
  margin-left: 21px;
  padding: 0;
  border: 0;
  background: none;
  font-size: 15px;
  font-style: italic;
}

.header-link {
  display: flex;
  align-items: center;
  gap: 11px;
  margin-right: 25px;
  white-space: nowrap;
}

.header-link.debug {
  margin-right: 33px;
}

.header-link.shop svg {
  color: #25b9d7;
}

.bell {
  margin-right: 32px;
}

.avatar {
  margin-right: -7px;
}

.body {
  flex: 1;
  min-height: 0;
  display: flex;
}

.sidebar {
  width: 243px;
  flex: none;
  overflow: hidden;
  background: #363a41;
}

.collapse {
  height: 53px;
  width: 243px;
  justify-content: flex-end;
  padding: 0 27px 3px 0;
}

.item {
  display: flex;
  gap: 11px;
  padding: 10px 0 10px 19px;
  font-size: 15px;
  line-height: 20px;
  color: #bebebe;
}

.ic {
  width: 24px;
  height: 24px;
  margin: -3px 0 -1px;
  color: #eee;
}

.item.current {
  padding-left: 13px;
  border-left: 5px solid #25b9d7;
  background: #202226;
  color: #fff;
}

.item.current .ic {
  color: #25b9d7;
}

.sidebar h2 {
  margin: 36px 0 0 19px;
  padding: 18px 0 15px;
  border-top: 2px solid #8a9ba0;
  font-size: 15px;
  font-weight: bold;
  line-height: 20px;
  color: #eee;
}

.main {
  flex: 1;
  min-width: 0;
  display: flex;
  flex-direction: column;
  background: #efefef;
}

.page-head {
  display: flex;
  height: 124px;
  flex: none;
  padding: 7px 0 0 19px;
  background: #fff;
  border-bottom: 1px solid #d3d8db;
  color: #363a41;
}

.crumb {
  line-height: 22px;
}

.page-head h1 {
  margin-top: 11px;
  font-size: 32px;
  line-height: 44px;
}

.tool {
  display: flex;
  flex-direction: column;
  align-items: center;
  gap: 13px;
  padding-top: 24px;
  font-size: 15px;
  white-space: nowrap;
}

.tool svg {
  color: #25b9d7;
}

.help-tool {
  margin: 0 -4px 0 19px;
}

.content {
  flex: 1;
  min-height: 0;
  display: flex;
  gap: 13px;
  padding-left: 19px;
}

.dashboard {
  flex: 0 1 1049px;
  padding-top: 21px;
  color: #363a41;
}

.panel {
  background: #fff;
  border: 1px solid #c4cdd0;
  border-radius: 6px;
  box-shadow: 0 1px 2px #ccd2d4;
}

.panel h3 {
  position: relative;
  height: 40px;
  margin: 0 5px;
  padding-left: 6px;
  border-bottom: 1px solid #dcdcdc;
  font-family: "Liberation Sans Narrow", "Roboto Condensed", Roboto, sans-serif;
  font-size: 16px;
  line-height: 40px;
}

.panel h3 svg {
  margin-right: 3px;
  vertical-align: -2px;
}

.calendar {
  display: flex;
  align-items: flex-start;
  justify-content: space-between;
  height: 90px;
  padding: 24px 25px;
  margin-bottom: 26px;
}

.btn-group {
  display: flex;
}

.btn-group button,
.datepicker {
  height: 39px;
  padding: 0 10px;
  border: 1px solid #ccd2d5;
  border-right-width: 0;
  background: none;
  font-size: 15px;
}

.btn-group button:first-child {
  border-radius: 4px 0 0 4px;
}

.btn-group button:last-child,
.datepicker {
  border-right-width: 1px;
  border-radius: 0 4px 4px 0;
}

.btn-group .on {
  border-color: #008abd;
  background: #00aff0;
  color: #fff;
  font-weight: bold;
}

.datepicker {
  border-radius: 4px;
}

.datepicker svg {
  vertical-align: -3px;
}

.datepicker b {
  color: #2a5a73;
}

.columns {
  display: grid;
  grid-template-columns: 252px 1fr 164px;
  gap: 14px;
  align-items: start;
}

.col {
  display: flex;
  flex-direction: column;
  gap: 26px;
}

.tips {
  height: 446px;
}

.tips h3,
.activity h3 {
  white-space: nowrap;
}

.panel-text {
  padding: 20px 20px 0 25px;
  line-height: 21px;
  color: #555;
  font-size: 15px;
}

.panel-text p {
  margin-bottom: 24px;
}

.connect {
  display: block;
  width: 200px;
  height: 82px;
  margin-top: 44px;
  padding: 0 20px;
  border: 0;
  border-radius: 3px;
  background: #00aff0;
  color: #fff;
  line-height: 22px;
}

.activity {
  height: 240px;
}

.head-tools {
  position: absolute;
  right: -8px;
  top: 0;
  display: flex;
}

.head-tools button {
  width: 38px;
  height: 39px;
  padding: 0;
  border: 0;
  border-left: 1px solid #dcdcdc;
  background: none;
  color: #aaa;
}

.head-tools svg,
.panel .head-tools svg {
  margin: 0;
  vertical-align: middle;
}

.visitors {
  display: grid;
  grid-template-columns: 170px 1fr;
  align-items: center;
  padding: 24px 0 0 25px;
}

.visitors a {
  font-size: 26px;
  line-height: 25px;
  color: #00aff0;
}

.visitors svg {
  margin-left: 4px;
  color: #999;
}

.visitors small {
  grid-column: span 2;
  margin-top: 6px;
  font-size: 15px;
  color: #888;
  white-space: nowrap;
}

.sales {
  height: 604px;
}

.sales table {
  width: calc(100% - 10px);
  height: 88px;
  margin: 0 5px;
  border-collapse: collapse;
  border-bottom: 2px solid #ccc;
  table-layout: fixed;
}

.sales th {
  padding: 15px 12px 0;
  border-left: 1px solid #ccc;
  vertical-align: top;
  font-family: "Liberation Sans Narrow", "Roboto Condensed", Roboto, sans-serif;
  font-size: 15px;
  font-weight: normal;
  line-height: 16px;
  color: #555;
}

.sales th:first-child {
  border-left: 0;
}

.news {
  height: 137px;
}

.news a {
  display: block;
  margin-top: 20px;
  padding-left: 53px;
  font-family: "Liberation Sans Narrow", "Roboto Condensed", Roboto, sans-serif;
  font-size: 17px;
  font-weight: 500;
  line-height: 21px;
  color: #00aff0;
}

.update {
  height: 107px;
  color: #000;
}

.update h3 {
  display: flex;
  align-items: center;
  gap: 4px;
  height: 37px;
  margin: 0;
  padding: 0 20px 0 16px;
  border-color: #bbc;
  font-family: "Open Sans", sans-serif;
  font-size: 16px;
  font-weight: 300;
}

.update h3 span {
  overflow: hidden;
  text-overflow: ellipsis;
  white-space: nowrap;
}

.update p {
  padding: 6px 0 0 10px;
  font-size: 15px;
  line-height: 20px;
  white-space: nowrap;
}

.support {
  height: 400px;
}

.support-text {
  padding: 20px 18px 0 25px;
  font-size: 15px;
  line-height: 21px;
  color: #555;
}

.support-text a {
  font-weight: bold;
  color: #00aff0;
}

/* help column */
.help {
  flex: 1;
  min-width: 0;
  margin-top: 51px;
  background: #fff;
  color: #4a4a4a;
}

.help-bar {
  display: flex;
  align-items: center;
  gap: 10px;
  height: 58px;
  padding-left: 13px;
  border-bottom: 5px solid #00aff0;
  color: #00aff0;
}

.help-bar a {
  display: flex;
}

.help-bar input {
  width: 245px;
  height: 40px;
  padding: 0 16px;
  border: 2px solid #ccc;
  border-radius: 5px;
  background: none;
  font-size: 16px;
}

.help-bar input::placeholder {
  color: #999;
}

.help-bar button {
  width: 50px;
  height: 40px;
  margin: 0 -8px 0 -7px;
  padding: 0;
  border: 0;
  border-radius: 5px;
  background: #00aff0;
  color: #fff;
}

.help-bar button svg {
  vertical-align: middle;
}

.help-text {
  padding: 0 8px 0 29px;
  font-size: 15px;
  line-height: 22px;
}

.help-text h2 {
  margin: 55px 0 11px;
  font-size: 28px;
  line-height: 30px;
}

.help-text p {
  margin-bottom: 19px;
}

.help-text .tight {
  margin-bottom: 10px;
}

/* error popup */
.backdrop {
  position: absolute;
  inset: 0;
  padding-top: 38px;
  background: rgba(0, 0, 0, .5);
}

.modal {
  display: grid;
  grid-template-columns: 54px minmax(0, 1fr);
  align-content: start;
  row-gap: 21px;
  width: 750px;
  height: 183px;
  margin: 0 auto;
  padding: 6px 20px 0 9px;
  border-left: 3px solid #ebb0b6;
  border-radius: 3px;
  background: #ffe1e3;
  color: #d2737c;
  font-size: 15px;
  line-height: 21px;
  white-space: nowrap;
}

.warn {
  width: 46px;
  height: 42px;
}

.modal p {
  padding-top: 13px;
}

.modal button {
  grid-column: 2;
  justify-self: end;
  width: 77px;
  height: 39px;
  padding: 0;
  border: 1px solid #ddd;
  border-radius: 4px;
  background: #fff;
  color: #363a41;
}

.modal button svg {
  vertical-align: -1px;
}

/* windows taskbar */
.taskbar {
  display: flex;
  flex: none;
  height: 40px;
  background: linear-gradient(90deg, #413b35 0, #3f3a36 20%, #3b302b 35%, #3a2a24 45%, #3b3d40 51%, #2b2320 58%, #2b211e 66%, #3b3530 78%, #403d36);
  color: #fff;
}

.start,
.task {
  display: flex;
  align-items: center;
  justify-content: center;
  position: relative;
  width: 49px;
  padding: 0;
  border: 0;
  background: none;
}

.start {
  width: 48px;
}

.task-search {
  display: flex;
  align-items: center;
  gap: 11px;
  width: 344px;
  margin-right: 1px;
  padding-left: 11px;
  background: #f2f2f2;
  border: 1px solid #bbb;
  color: #222;
}

.task-search input {
  flex: 1;
  border: 0;
  padding: 0;
  background: none;
  font-size: 14px;
}

.tasks {
  display: flex;
}

.running::after {
  content: "";
  position: absolute;
  bottom: 0;
  left: 5px;
  right: 4px;
  height: 2px;
  background: #a6c8f5;
}

.current-app {
  background: #67625e;
}

.current-app::after {
  left: 0;
  right: 0;
}

.ps {
  width: 22px;
  height: 22px;
  border: 1px solid #00c8ff;
  background: #001d26;
  color: #00c8ff;
  font-size: 12px;
  line-height: 19px;
}

.unir {
  width: 24px;
  height: 24px;
  background: #0098cd;
  font-size: 10px;
  font-weight: bold;
  line-height: 18px;
}

.count {
  position: absolute;
  right: 3px;
  bottom: 4px;
  width: 17px;
  height: 17px;
  border: 1px solid #999;
  border-radius: 50%;
  background: #2a2522;
  font-size: 11px;
  line-height: 15px;
  text-align: center;
}

.tray {
  display: flex;
  align-items: center;
  padding-right: 4px;
  font-size: 12px;
}

.tray-up {
  margin: 0 14px 0 9px;
}

.lang {
  width: 28px;
  font-size: 11px;
}

.clock {
  width: 69px;
  text-align: center;
  line-height: 18px;
}

.notif {
  position: relative;
  display: flex;
  width: 47px;
  height: 40px;
  padding: 11px 0 0 12px;
  border-right: 1px solid #777;
}

.notif .count {
  right: 12px;
}
```
